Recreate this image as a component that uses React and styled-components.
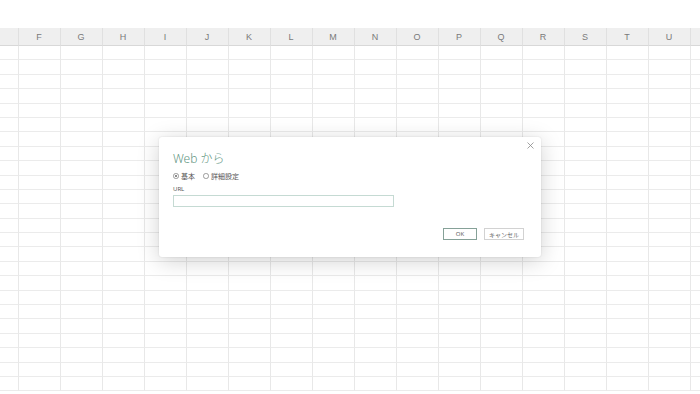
import React from "react";
import styled, { createGlobalStyle } from "styled-components";

const GlobalStyle = createGlobalStyle`
  html, body {
    margin: 0;
    padding: 0;
    background: #ffffff;
    font-family: "Noto Sans", "Noto Sans CJK JP", sans-serif;
  }
  #root {
    width: 700px;
    height: 394px;
    overflow: hidden;
  }
`;

const Page = styled.div`
  position: relative;
  width: 700px;
  height: 394px;
  overflow: hidden;
  background: #fff;
`;

const TopSpace = styled.div`
  height: 28px;
  background: #fff;
`;

const Sheet = styled.div`
  margin-left: -23.5px;
  display: grid;
  grid-template-columns: repeat(${(p) => p.$cols}, 42px);
`;

const HeaderCell = styled.div`
  height: 18px;
  box-sizing: border-box;
  background: #efefef;
  border-right: 1px solid #e0e0e0;
  border-bottom: 1px solid #d8d8d8;
  display: flex;
  align-items: center;
  justify-content: center;
  font-family: "Liberation Sans", Arial, sans-serif;
  font-size: 9px;
  color: #7a7a7a;
`;

const Cell = styled.div`
  height: 14.4px;
  box-sizing: border-box;
  border-right: 1px solid #e8e8e8;
  border-bottom: 1px solid #ebebeb;
`;

const Dialog = styled.div`
  position: absolute;
  left: 159px;
  top: 137px;
  width: 382px;
  height: 120px;
  box-sizing: border-box;
  background: #fff;
  border-radius: 3px;
  box-shadow: 0 4px 22px rgba(0, 0, 0, 0.18), 0 0 2px rgba(0, 0, 0, 0.12);
  padding: 14px 17px 0 14px;
  display: flex;
  flex-direction: column;
`;

const Close = styled.div`
  position: absolute;
  right: 5px;
  top: 2px;
  width: 12px;
  height: 12px;
  display: flex;
  align-items: center;
  justify-content: center;
`;

const Title = styled.div`
  font-size: 12px;
  line-height: 16px;
  font-weight: 300;
  color: #5f9582;
  font-family: "Noto Sans", "Noto Sans CJK JP", sans-serif;
`;

const RadioRow = styled.div`
  display: flex;
  align-items: center;
  gap: 8px;
  margin-top: 4px;
  height: 10px;
`;

const RadioItem = styled.label`
  display: flex;
  align-items: center;
  gap: 2.5px;
  font-size: 7px;
  color: #555;
`;

const RadioDot = styled.span`
  width: 5.5px;
  height: 5.5px;
  border-radius: 50%;
  border: 0.6px solid #999;
  display: inline-flex;
  align-items: center;
  justify-content: center;
  box-sizing: border-box;
  &::after {
    content: "";
    width: 2px;
    height: 2px;
    border-radius: 50%;
    background: ${(p) => (p.$on ? "#666" : "transparent")};
  }
`;

const Label = styled.div`
  margin-top: 5px;
  font-size: 6px;
  line-height: 7px;
  color: #555;
`;

const UrlInput = styled.div`
  margin-top: 2px;
  width: 221px;
  height: 12px;
  box-sizing: border-box;
  border: 1px solid #c5dad3;
`;

const Footer = styled.div`
  margin-top: 21px;
  display: flex;
  justify-content: flex-end;
  gap: 7px;
`;

const Button = styled.div`
  height: 12px;
  width: ${(p) => p.$w}px;
  box-sizing: border-box;
  border: 1px solid ${(p) => (p.$primary ? "#86a198" : "#d2d2d2")};
  display: flex;
  align-items: center;
  justify-content: center;
  font-size: 6px;
  color: #666;
  background: #fff;
`;

const cols = ["E", "F", "G", "H", "I", "J", "K", "L", "M", "N", "O", "P", "Q", "R", "S", "T", "U", "V"];
const rowCount = 24;

export default function App() {
  return (
    <Page>
      <GlobalStyle />
      <TopSpace />
      <Sheet $cols={cols.length}>
        {cols.map((c) => (
          <HeaderCell key={c}>{c}</HeaderCell>
        ))}
        {Array.from({ length: rowCount * cols.length }).map((_, i) => (
          <Cell key={i} />
        ))}
      </Sheet>
      <Dialog>
        <Close>
          <svg width="7" height="7" viewBox="0 0 7 7">
            <path d="M0.5 0.5 L6.5 6.5 M6.5 0.5 L0.5 6.5" stroke="#8a8a8a" strokeWidth="0.8" />
          </svg>
        </Close>
        <Title>Web から</Title>
        <RadioRow>
          <RadioItem>
            <RadioDot $on />
            基本
          </RadioItem>
          <RadioItem>
            <RadioDot />
            詳細設定
          </RadioItem>
        </RadioRow>
        <Label>URL</Label>
        <UrlInput />
        <Footer>
          <Button $primary $w={34}>OK</Button>
          <Button $w={40}>キャンセル</Button>
        </Footer>
      </Dialog>
    </Page>
  );
}
